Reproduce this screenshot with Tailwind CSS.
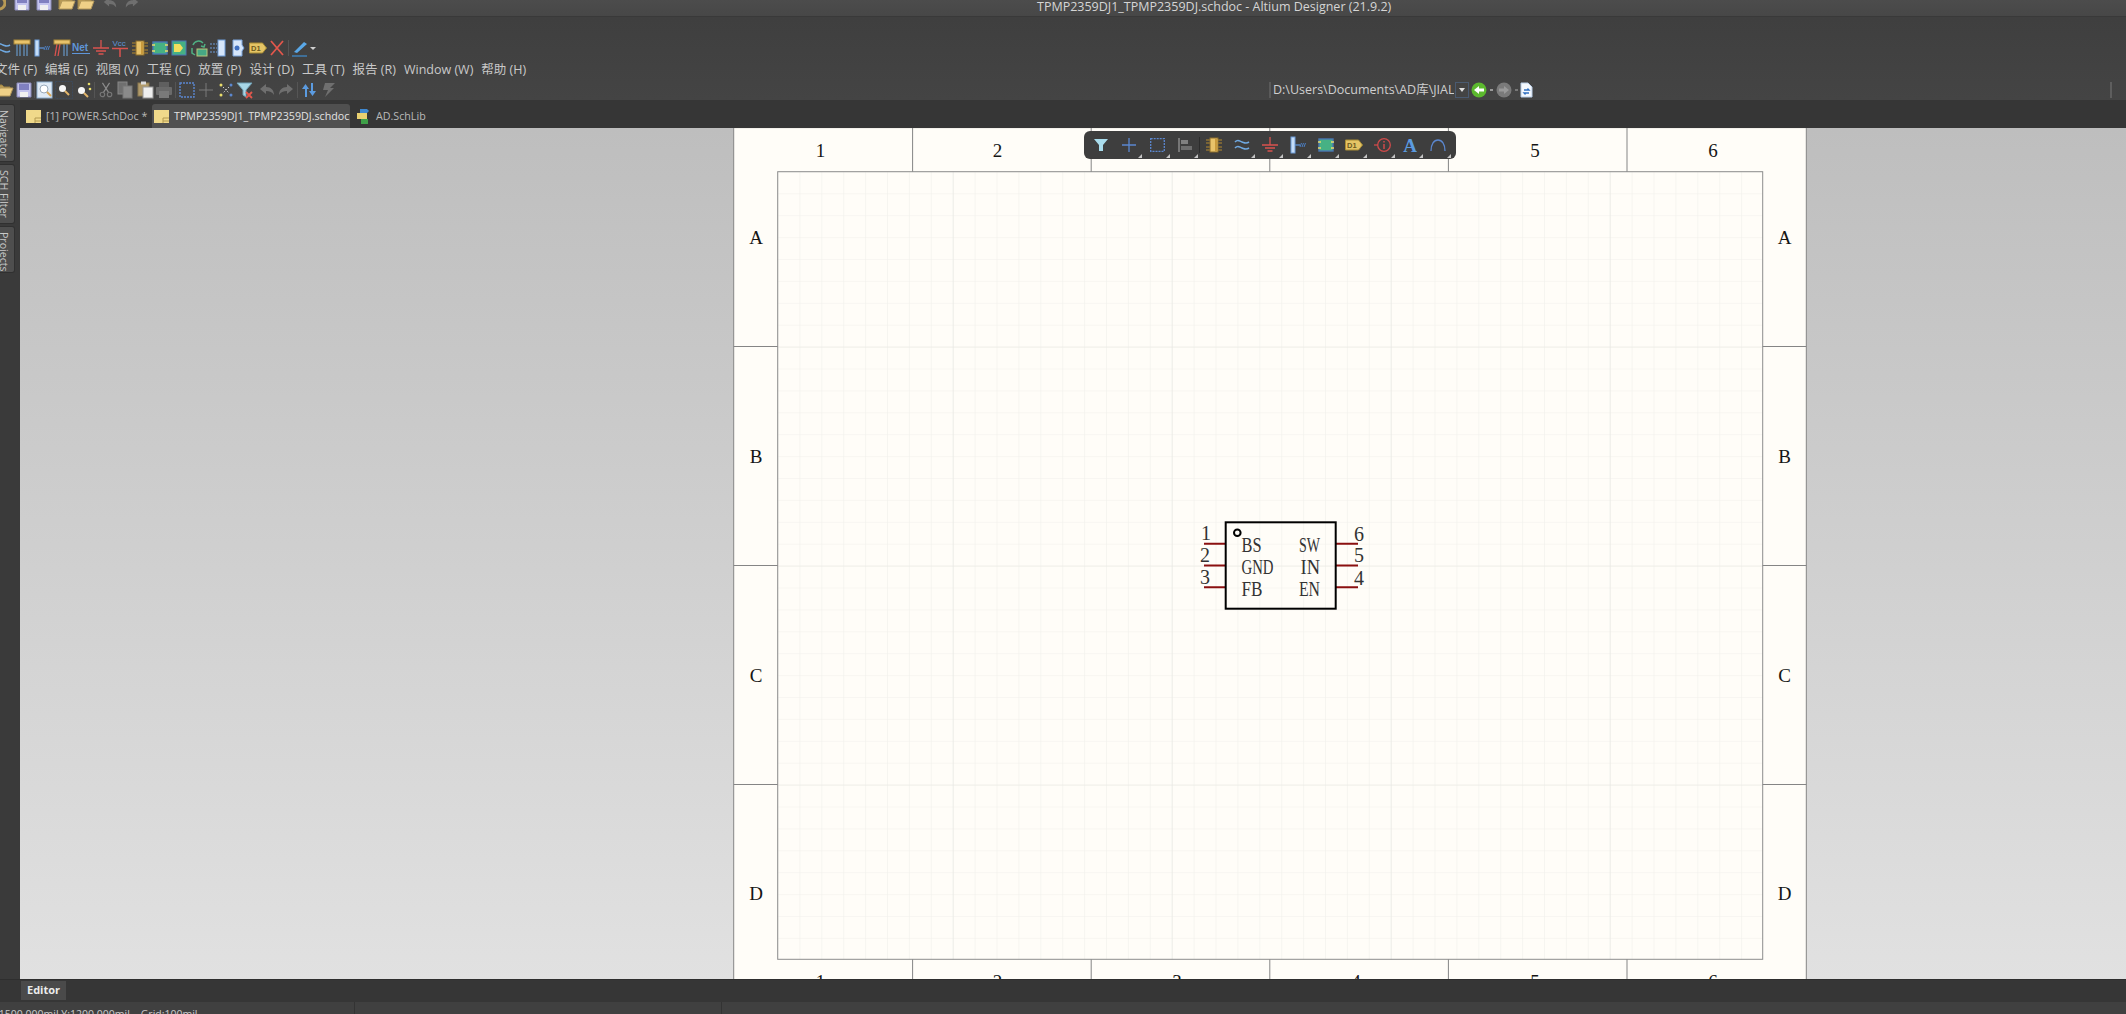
<!DOCTYPE html>
<html lang="zh">
<head>
    <meta charset="UTF-8">
    <title>TPMP2359DJ1_TPMP2359DJ.schdoc - Altium Designer (21.9.2)</title>
    <script src="https://cdn.jsdelivr.net/npm/@tailwindcss/browser@4"></script>
</head>
<body class="w-[2126px] h-[1014px] overflow-hidden flex flex-col bg-[#363636] text-[#c9c9c9] font-['Open_Sans','Noto_Sans_CJK_SC',sans-serif]">

    <!-- shared toolbar icons -->
    <svg class="hidden">
        <symbol id="wire" viewBox="0 0 18 18"><path d="M2 6c3-3 4-1 7 0s4 2 7 0M2 12c3-3 4-1 7 0s4 2 7 0" fill="none" stroke="#6fa8e0" stroke-width="1.6"/></symbol>
        <symbol id="comp" viewBox="0 0 18 18"><path d="M1 4h16M1 7h16M1 11h16M1 14h16" stroke="#b58a2e"/><rect x="5" y="2" width="8" height="14" fill="#e8c36a" stroke="#8c6d2a"/><rect x="10" y="3" width="2" height="12" fill="#c99a3c"/></symbol>
        <symbol id="ic" viewBox="0 0 18 18"><rect x="2" y="3" width="14" height="12" fill="#46b184" stroke="#4a78b5" stroke-width="1.4"/><path d="M1 6h3M1 12h3M14 6h3M14 12h3" stroke="#e8dc6a" stroke-width="1.6"/></symbol>
        <symbol id="gnd" viewBox="0 0 18 18"><path d="M9 1v8M1 9h16M4 12h10M6.5 15h5" fill="none" stroke="#d9534f" stroke-width="1.3"/></symbol>
        <symbol id="pin" viewBox="0 0 18 18"><rect x="2" y="1" width="4" height="16" fill="#c5ddf7" stroke="#6d9bd8"/><path d="M6 9h5" stroke="#5b8fd0" stroke-width="1.3"/><path d="M11 11l1.5-4M13 11l1.5-4M15 11l1.5-4" stroke="#4b7fc4"/></symbol>
        <symbol id="tag" viewBox="0 0 18 18"><path d="M.5 4h13l4 5-4 5H.5z" fill="#e4c465" stroke="#a88c35"/><text x="2" y="12" font-size="7.5" font-weight="700" font-family="Liberation Sans" fill="#6b5a20">D1</text></symbol>
        <symbol id="cut" viewBox="0 0 18 18"><path d="M5 1l7 11M13 1L6 12" stroke="#8b8b8b" stroke-width="1.3"/><circle cx="5" cy="14" r="2.5" fill="none" stroke="#777" stroke-width="1.3"/><circle cx="13" cy="14" r="2.5" fill="none" stroke="#777" stroke-width="1.3"/></symbol>
        <symbol id="disk" viewBox="0 0 18 18"><path d="M2 2h14v14H2z" fill="#c4c4ee" stroke="#8a8ab8"/><rect x="4" y="3" width="10" height="6" fill="#8080c0"/><rect x="5" y="11" width="8" height="5" fill="#f0f0f0"/></symbol>
        <symbol id="folder" viewBox="0 0 18 18"><path d="M1 15V4h5l2 2h6v2" fill="#b89a55" stroke="#9a8142"/><path d="M1 15l3-8h13l-3 8z" fill="#efd087" stroke="#b2975a"/></symbol>
        <symbol id="undo" viewBox="0 0 18 18"><path d="M2 8l6-5v3c5 0 8 3 8 8-2-3-4-4-8-4v3z" fill="#6f6f6f"/></symbol>
        <symbol id="redo" viewBox="0 0 18 18"><path d="M16 8l-6-5v3c-5 0-8 3-8 8 2-3 4-4 8-4v3z" fill="#6f6f6f"/></symbol>
        <symbol id="sheet" viewBox="0 0 15 13"><rect width="15" height="13" fill="#f0d98a"/><path d="M9 8h6M9 11h6M9 8v5" stroke="#b39a50"/></symbol>
    </svg>

    <!-- title bar -->
    <div class="h-[17px] shrink-0 flex items-start overflow-hidden bg-linear-to-b from-[#4c4c4c] to-[#474747] border-b border-[#393939]">
        <div class="w-[1037px] shrink-0 flex -mt-[6px]">
            <svg class="w-[12px] h-[18px] -ml-[6px]" viewBox="0 0 12 18"><circle cx="5" cy="9" r="6" fill="none" stroke="#b89a55" stroke-width="3"/></svg>
            <svg class="w-[18px] h-[18px] ml-[7px]"><use href="#disk"/></svg>
            <svg class="w-[18px] h-[18px] ml-[4px]"><use href="#disk"/></svg>
            <svg class="w-[18px] h-[18px] ml-[5px]"><use href="#folder"/></svg>
            <svg class="w-[18px] h-[18px] ml-[1px]"><use href="#folder"/></svg>
            <svg class="w-[16px] h-[18px] ml-[7px]"><use href="#undo"/></svg>
            <svg class="w-[16px] h-[18px] ml-[6px]"><use href="#redo"/></svg>
        </div>
        <span class="text-[12.5px] leading-[13px] whitespace-nowrap text-[#d5d5d5]">TPMP2359DJ1_TPMP2359DJ.schdoc - Altium Designer (21.9.2)</span>
    </div>

    <!-- ribbon -->
    <div class="h-[83px] shrink-0 flex flex-col bg-linear-to-b from-[#3f3f3f] to-[#444444]">
        <!-- wiring toolbar -->
        <div class="mt-[21px] h-[20px] flex items-center -ml-[7px]">
            <span class="w-[19.6px] flex justify-center"><svg class="w-[18px] h-[18px]"><use href="#wire"/></svg></span>
            <span class="w-[19.6px] flex justify-center"><svg class="w-[18px] h-[18px]" viewBox="0 0 18 18"><path d="M4 5v12M7 5v12M11 5v12M14 5v12" stroke="#6fa8e0"/><rect x="1" y="1" width="16" height="4" fill="#e8c36a" stroke="#a8873a"/></svg></span>
            <span class="w-[19.6px] flex justify-center"><svg class="w-[18px] h-[18px]"><use href="#pin"/></svg></span>
            <span class="w-[19.6px] flex justify-center"><svg class="w-[18px] h-[18px]" viewBox="0 0 18 18"><path d="M4 5L2 17M7 5L5 17" stroke="#d9534f" stroke-width="1.3"/><path d="M11 5v12M14 5v12" stroke="#6fa8e0"/><rect x="1" y="1" width="16" height="4" fill="#e8c36a" stroke="#a8873a"/></svg></span>
            <span class="w-[19.6px] flex justify-center"><svg class="w-[18px] h-[18px]" viewBox="0 0 18 18"><text x="0" y="12" font-size="10" font-weight="700" font-family="Liberation Sans" fill="#5f95d8">Net</text><path d="M0 14.5h18" stroke="#5f95d8"/></svg></span>
            <span class="w-[19.6px] flex justify-center"><svg class="w-[18px] h-[18px]"><use href="#gnd"/></svg></span>
            <span class="w-[19.6px] flex justify-center"><svg class="w-[18px] h-[18px]" viewBox="0 0 18 18"><text x="1.5" y="7" font-size="8" font-family="Liberation Sans" fill="#5f95d8">Vcc</text><path d="M1 9.5h16M9 9.5V18" stroke="#d9534f" stroke-width="1.5"/></svg></span>
            <span class="w-[19.6px] flex justify-center"><svg class="w-[18px] h-[18px]"><use href="#comp"/></svg></span>
            <span class="w-[19.6px] flex justify-center"><svg class="w-[18px] h-[18px]"><use href="#ic"/></svg></span>
            <span class="w-[19.6px] flex justify-center"><svg class="w-[18px] h-[18px]" viewBox="0 0 18 18"><rect x="2" y="2" width="14" height="14" fill="#46b184" stroke="#4a78b5"/><path d="M4 5h6l3 4-3 4H4z" fill="#f0df5e"/></svg></span>
            <span class="w-[19.6px] flex justify-center"><svg class="w-[18px] h-[18px]" viewBox="0 0 18 18"><path d="M3 6a6 6 0 0 1 10-2M15 5l-1 3-3-1" fill="none" stroke="#4fb083" stroke-width="1.5"/><rect x="7" y="10" width="10" height="7" fill="#46a884" stroke="#b8c87a"/><path d="M2 9v5l3 2" fill="none" stroke="#4fb083" stroke-width="1.5"/></svg></span>
            <span class="w-[19.6px] flex justify-center"><svg class="w-[18px] h-[18px]" viewBox="0 0 18 18"><path d="M1 5h7M1 9h7M1 13h7" stroke="#6d9bd8" stroke-dasharray="2 1"/><rect x="9" y="1" width="7" height="16" fill="#d6e6fa" stroke="#6d9bd8"/></svg></span>
            <span class="w-[19.6px] flex justify-center"><svg class="w-[18px] h-[18px]" viewBox="0 0 18 18"><path d="M4 1h9v5l2 3-2 3v5H4z" fill="#d6e6fa" stroke="#7ba4dc"/><circle cx="8" cy="9" r="2.5" fill="#3f6fc0"/></svg></span>
            <span class="w-[19.6px] flex justify-center"><svg class="w-[18px] h-[18px]"><use href="#tag"/></svg></span>
            <span class="w-[19.6px] flex justify-center"><svg class="w-[18px] h-[18px]" viewBox="0 0 18 18"><path d="M3 2l12 14M15 2L3 16" stroke="#e2574c" stroke-width="1.8"/></svg></span>
            <span class="w-[1px] h-[16px] bg-[#555555] ml-[1px]"></span>
            <span class="w-[19.6px] flex justify-center ml-[1px]"><svg class="w-[18px] h-[18px]" viewBox="0 0 18 18"><path d="M3 13L13 3l3 2L6 14z" fill="#5aa8e8"/><path d="M1 17h15" stroke="#3f88c8" stroke-width="1.3"/></svg></span>
            <span class="w-0 h-0 border-x-[3px] border-x-transparent border-t-[3px] border-t-[#d0d0d0]"></span>
        </div>

        <!-- menu -->
        <nav class="mt-[2px] h-[20px] flex items-center gap-[8px] -ml-[5px] text-[12.5px] whitespace-nowrap">
            <span>文件 (F)</span><span>编辑 (E)</span><span>视图 (V)</span><span>工程 (C)</span><span>放置 (P)</span><span>设计 (D)</span><span>工具 (T)</span><span>报告 (R)</span><span>Window (W)</span><span>帮助 (H)</span>
        </nav>

        <!-- standard toolbar -->
        <div class="h-[20px] flex items-center -ml-[5px]">
            <span class="w-[19.5px] flex justify-center"><svg class="w-[18px] h-[18px]"><use href="#folder"/></svg></span>
            <span class="w-[19.5px] flex justify-center"><svg class="w-[18px] h-[18px]"><use href="#disk"/></svg></span>
            <span class="w-[1px] h-[16px] bg-[#555555]"></span>
            <span class="w-[19.5px] flex justify-center"><svg class="w-[18px] h-[18px]" viewBox="0 0 18 18"><rect x="1" y="1" width="15" height="16" fill="#dfeaf5" stroke="#8fb0d0"/><circle cx="8" cy="8" r="4" fill="#fff" stroke="#9ab"/><path d="M11 11l4 4" stroke="#d9a85a" stroke-width="2"/></svg></span>
            <span class="w-[19.5px] flex justify-center"><svg class="w-[18px] h-[18px]" viewBox="0 0 18 18"><rect x=".5" y=".5" width="17" height="17" fill="none" stroke="#3d4a5c" stroke-dasharray="2 1"/><circle cx="7.5" cy="7.5" r="3.5" fill="#f7f7f7"/><path d="M10 10l4 4" stroke="#e2b56a" stroke-width="2"/></svg></span>
            <span class="w-[19.5px] flex justify-center"><svg class="w-[18px] h-[18px]" viewBox="0 0 18 18"><circle cx="6.5" cy="9.5" r="3.5" fill="#f7f7f7"/><path d="M9 12l4 4" stroke="#e2b56a" stroke-width="2"/><circle cx="14" cy="3" r="1.3" fill="#e8dc6a"/><circle cx="15" cy="8" r="1.3" fill="#e8dc6a"/></svg></span>
            <span class="w-[2.5px] flex justify-center"><span class="w-[1px] h-[16px] bg-[#555555]"></span></span>
            <span class="w-[19.5px] flex justify-center"><svg class="w-[16px] h-[16px]"><use href="#cut"/></svg></span>
            <span class="w-[19.5px] flex justify-center"><svg class="w-[18px] h-[18px]" viewBox="0 0 18 18"><rect x="2" y="1" width="9" height="12" fill="#6f6f6f" stroke="#888"/><rect x="7" y="5" width="9" height="12" fill="#8a8a8a" stroke="#777"/></svg></span>
            <span class="w-[19.5px] flex justify-center"><svg class="w-[18px] h-[18px]" viewBox="0 0 18 18"><rect x="2" y="2" width="11" height="13" fill="#b09a6a" stroke="#8a7850"/><rect x="5" y=".5" width="5" height="3" fill="#ddd"/><rect x="7" y="6" width="10" height="11" fill="#efefef" stroke="#999"/></svg></span>
            <span class="w-[19.5px] flex justify-center"><svg class="w-[18px] h-[18px]" viewBox="0 0 18 18"><rect x="4" y="1" width="10" height="5" fill="#5f5f5f"/><rect x="1" y="6" width="16" height="8" rx="1" fill="#6a6a6a"/><rect x="4" y="10" width="10" height="7" fill="#7a7a7a"/></svg></span>
            <span class="w-[3px] flex justify-center"><span class="w-[1px] h-[16px] bg-[#555555]"></span></span>
            <span class="w-[19.5px] flex justify-center"><svg class="w-[16px] h-[16px]" viewBox="0 0 16 16"><rect x="1" y="1" width="14" height="14" fill="none" stroke="#5b87cf" stroke-width="1.4" stroke-dasharray="2 1"/></svg></span>
            <span class="w-[19.5px] flex justify-center"><svg class="w-[16px] h-[16px]" viewBox="0 0 16 16"><path d="M8 1v14M1 8h14" stroke="#7a7a7a"/></svg></span>
            <span class="w-[19.5px] flex justify-center"><svg class="w-[16px] h-[16px]" viewBox="0 0 16 16"><circle cx="3" cy="3" r="1.5" fill="#e8dc6a"/><circle cx="3" cy="13" r="1.5" fill="#e8dc6a"/><circle cx="13" cy="3" r="1.5" fill="#5b87cf"/><circle cx="13" cy="13" r="1.5" fill="#5b87cf"/><path d="M5 5l6 6M11 5l-6 6" stroke="#c9c9c9" stroke-dasharray="1.5 1.5"/></svg></span>
            <span class="w-[19.5px] flex justify-center"><svg class="w-[18px] h-[18px]" viewBox="0 0 18 18"><path d="M1 2h15l-6 7v7l-3-2V9z" fill="#a8d6e6" stroke="#6fa0b5"/><path d="M10 11l6 6M16 11l-6 6" stroke="#e2574c" stroke-width="1.8"/></svg></span>
            <span class="w-[19.5px] ml-[2px] flex justify-center"><svg class="w-[18px] h-[18px]"><use href="#undo"/></svg></span>
            <span class="w-[19.5px] flex justify-center"><svg class="w-[18px] h-[18px]"><use href="#redo"/></svg></span>
            <span class="w-[3px] flex justify-center"><span class="w-[1px] h-[16px] bg-[#555555]"></span></span>
            <span class="w-[19.5px] flex justify-center"><svg class="w-[16px] h-[16px]" viewBox="0 0 16 16"><path d="M4 15V7H1l3.500-5L8 7H6v8zM12 1v8h3l-3.500 5L8 9h2V1z" fill="#5b9be0"/></svg></span>
            <span class="w-[19.5px] flex justify-center"><svg class="w-[16px] h-[16px]" viewBox="0 0 16 16"><path d="M5 1h10l-5 5h4L5 15l3-7H3z" fill="#6f6f6f"/></svg></span>

            <!-- address box -->
            <span class="ml-[931px] w-[2px] h-[16px] bg-[#5a5a5a]"></span>
            <span class="ml-[2px] w-[181px] overflow-hidden whitespace-nowrap text-[12.5px] text-[#cfcfcf]">D:\Users\Documents\AD库\JIAL</span>
            <span class="ml-[1px] w-[14px] h-[16px] flex items-center justify-center border border-[#4a5a70]"><span class="w-0 h-0 border-x-[3px] border-x-transparent border-t-[4px] border-t-[#e0e0e0]"></span></span>
            <svg class="ml-[2px] w-[16px] h-[16px]" viewBox="0 0 16 16"><circle cx="8" cy="8" r="7.5" fill="#5cb82e"/><path d="M3 8l5-4v2.500h5v3H8V12z" fill="#fff"/></svg>
            <span class="ml-[3px] w-[3px] h-[2px] bg-[#999999]"></span>
            <svg class="ml-[3px] w-[16px] h-[16px]" viewBox="0 0 16 16"><circle cx="8" cy="8" r="7.5" fill="#7a7a7a"/><path d="M13 8L8 4v2.500H3v3h5V12z" fill="#9a9a9a"/></svg>
            <span class="ml-[3px] w-[3px] h-[2px] bg-[#777777]"></span>
            <svg class="ml-[2px] w-[13px] h-[16px]" viewBox="0 0 13 16"><path d="M1 1h7l4 4v10H1z" fill="#f4f8fd" stroke="#b8cde6"/><path d="M4 8h5l-1.500-1.500M9 11H4l1.500 1.500" fill="none" stroke="#2f6fc0" stroke-width="1.3"/></svg>
            <span class="ml-auto mr-[14px] w-[2px] h-[16px] bg-[#5e5e5e]"></span>
        </div>
    </div>

    <!-- workspace -->
    <div class="flex-1 min-h-0 flex">
        <!-- side panels -->
        <aside class="w-[20px] shrink-0 pt-[4px] flex flex-col gap-[2px] bg-[#3a3a3a] text-[10.6px] overflow-hidden">
            <div class="w-[15px] h-[58px] pt-[5px] rounded-r-[3px] bg-[#4e4e4e] border border-l-0 border-[#303030] overflow-hidden"><span class="block -ml-[4px] leading-[16px] whitespace-nowrap [writing-mode:vertical-rl]">Navigator</span></div>
            <div class="w-[15px] h-[60px] pt-[5px] rounded-r-[3px] bg-[#4e4e4e] border border-l-0 border-[#303030] overflow-hidden"><span class="block -ml-[4px] leading-[16px] whitespace-nowrap [writing-mode:vertical-rl]">SCH Filter</span></div>
            <div class="w-[15px] h-[47px] pt-[5px] rounded-r-[3px] bg-[#4e4e4e] border border-l-0 border-[#303030] overflow-hidden"><span class="block -ml-[4px] leading-[16px] whitespace-nowrap [writing-mode:vertical-rl]">Projects</span></div>
        </aside>

        <div class="flex-1 min-w-0 flex flex-col">
            <!-- document tabs -->
            <div class="h-[28px] shrink-0 pt-[4px] flex text-[10.7px] whitespace-nowrap">
                <div class="w-[132px] shrink-0 flex items-center pl-[6px] gap-[5px] text-[#b9b9b9]">
                    <svg class="w-[15px] h-[13px] shrink-0"><use href="#sheet"/></svg>
                    <span>[1] POWER.SchDoc *</span>
                </div>
                <div class="w-[198px] shrink-0 flex items-center pl-[2px] gap-[5px] rounded-t-[3px] bg-[#505050] text-[#e2e2e2]">
                    <svg class="w-[15px] h-[13px] shrink-0"><use href="#sheet"/></svg>
                    <span>TPMP2359DJ1_TPMP2359DJ.schdoc</span>
                </div>
                <div class="flex items-center pl-[5px] gap-[5px] text-[#b9b9b9]">
                    <svg class="w-[16px] h-[16px] shrink-0" viewBox="0 0 16 16"><path d="M5 1h7l2 2-2 2H5z" fill="#3f88d0"/><rect x="2" y="5" width="10" height="6" fill="#e8d070"/><rect x="6" y="11" width="7" height="5" fill="#3fa048"/></svg>
                    <span>AD.SchLib</span>
                </div>
            </div>

            <!-- schematic canvas -->
            <main class="flex-1 min-h-0 relative overflow-hidden bg-linear-to-b from-[#bebebe] to-[#e1e1e1]">
                <svg class="absolute left-[713px] top-[-1px] w-[1074px] h-[876px]" viewBox="733 127 1074 876">
                    <defs>
                        <pattern id="minor" x="733.7" y="127.6" width="21.9" height="21.9" patternUnits="userSpaceOnUse"><path d="M0 0h21.9M0 0v21.9" fill="none" stroke="#f1f0eb" stroke-width="1.2"/></pattern>
                        <pattern id="major" x="733.7" y="127.6" width="219" height="219" patternUnits="userSpaceOnUse"><path d="M0 0h219M0 0v219" fill="none" stroke="#e7e7e2" stroke-width="1.2"/></pattern>
                    </defs>
                    <rect x="733.7" y="127.6" width="1072.6" height="875" fill="#fffdf8" stroke="#858585"/>
                    <rect x="777.7" y="171.7" width="985" height="787.6" fill="url(#minor)"/>
                    <rect x="777.7" y="171.7" width="985" height="787.6" fill="url(#major)"/>
                    <rect x="777.7" y="171.7" width="985" height="787.6" fill="none" stroke="#8c8c8c"/>
                    <path d="M912.6 127.6V171.7M1091.2 127.6V171.7M1269.8 127.6V171.7M1448.4 127.6V171.7M1627 127.6V171.7M912.6 959.3V1003M1091.2 959.3V1003M1269.8 959.3V1003M1448.4 959.3V1003M1627 959.3V1003M733.7 346.5H777.7M733.7 565.5H777.7M733.7 784.5H777.7M1762.7 346.5H1806.3M1762.7 565.5H1806.3M1762.7 784.5H1806.3" stroke="#858585" fill="none"/>

                    <g class="font-['Liberation_Serif',serif]" font-size="19" fill="#151515" text-anchor="middle">
                        <text x="820.5" y="156.5">1</text><text x="997.5" y="156.5">2</text><text x="1177" y="156.5">3</text><text x="1356" y="156.5">4</text><text x="1535" y="156.5">5</text><text x="1713" y="156.5">6</text>
                        <text x="820.5" y="988">1</text><text x="997.5" y="988">2</text><text x="1177" y="988">3</text><text x="1356" y="988">4</text><text x="1535" y="988">5</text><text x="1713" y="988">6</text>
                        <text x="756" y="244">A</text><text x="756" y="463">B</text><text x="756" y="682">C</text><text x="756" y="900">D</text>
                        <text x="1784.5" y="244">A</text><text x="1784.5" y="463">B</text><text x="1784.5" y="682">C</text><text x="1784.5" y="900">D</text>
                    </g>

                    <!-- TPMP2359 symbol -->
                    <path d="M1204 543.7h22M1204 565.4h22M1204 587.2h22M1336 543.7h22M1336 565.4h22M1336 587.2h22" stroke="#8b1010" stroke-width="2"/>
                    <rect x="1225.7" y="522.3" width="110" height="86.4" fill="none" stroke="#000" stroke-width="2"/>
                    <circle cx="1237.3" cy="532.7" r="3.3" fill="none" stroke="#000" stroke-width="2"/>
                    <g class="font-['Liberation_Serif',serif]" font-size="21" fill="#333333">
                        <text x="1241.5" y="551.7" textLength="20" lengthAdjust="spacingAndGlyphs">BS</text>
                        <text x="1241.5" y="574" textLength="32" lengthAdjust="spacingAndGlyphs">GND</text>
                        <text x="1241.5" y="595.7" textLength="21" lengthAdjust="spacingAndGlyphs">FB</text>
                        <text x="1299" y="551.7" textLength="21" lengthAdjust="spacingAndGlyphs">SW</text>
                        <text x="1300.5" y="574" textLength="19.5" lengthAdjust="spacingAndGlyphs">IN</text>
                        <text x="1299" y="595.7" textLength="21" lengthAdjust="spacingAndGlyphs">EN</text>
                        <text x="1201" y="540" font-size="20">1</text>
                        <text x="1200" y="562" font-size="20">2</text>
                        <text x="1200" y="584" font-size="20">3</text>
                        <text x="1354" y="540.5" font-size="20">6</text>
                        <text x="1354" y="562" font-size="20">5</text>
                        <text x="1354" y="585" font-size="20">4</text>
                    </g>
                </svg>

                <!-- active bar -->
                <div class="absolute left-[1064px] top-[3px] h-[28px] pl-[3px] pr-[4px] flex items-center rounded-[6px] bg-[#3e3e3e]">
                    <span class="relative w-[28px] h-[28px] flex items-center justify-center"><svg class="w-[14px] h-[12px]" viewBox="0 0 14 12"><path d="M0 0h14L9 6v6H5V6z" fill="#a9dcec"/></svg></span>
                    <span class="relative w-[28px] h-[28px] flex items-center justify-center"><svg class="w-[14px] h-[14px]" viewBox="0 0 14 14"><path d="M7 0v14M0 7h14" stroke="#5b87cf" stroke-width="1.3"/></svg><i class="absolute right-[1px] bottom-[1px] border-b-[4px] border-l-[4px] border-l-transparent border-b-[#c4c4c4]"></i></span>
                    <span class="relative w-[28px] h-[28px] flex items-center justify-center"><svg class="w-[15px] h-[14px]" viewBox="0 0 15 14"><rect x=".7" y=".7" width="13.6" height="12.6" fill="none" stroke="#5b87cf" stroke-width="1.3" stroke-dasharray="2 1"/></svg><i class="absolute right-[1px] bottom-[1px] border-b-[4px] border-l-[4px] border-l-transparent border-b-[#c4c4c4]"></i></span>
                    <span class="relative w-[28px] h-[28px] flex items-center justify-center"><svg class="w-[14px] h-[14px]" viewBox="0 0 14 14"><path d="M1 0v14" stroke="#8a8a8a" stroke-width="1.5"/><rect x="3" y="2" width="7" height="4" fill="#808080"/><rect x="3" y="8" width="11" height="4" fill="#6e6e6e"/></svg><i class="absolute right-[1px] bottom-[1px] border-b-[4px] border-l-[4px] border-l-transparent border-b-[#c4c4c4]"></i></span>
                    <span class="w-[1px] h-[16px] bg-[#2c2c2c]"></span>
                    <span class="relative w-[28px] h-[28px] flex items-center justify-center"><svg class="w-[18px] h-[18px]"><use href="#comp"/></svg></span>
                    <span class="relative w-[28px] h-[28px] flex items-center justify-center"><svg class="w-[18px] h-[18px]"><use href="#wire"/></svg><i class="absolute right-[1px] bottom-[1px] border-b-[4px] border-l-[4px] border-l-transparent border-b-[#c4c4c4]"></i></span>
                    <span class="relative w-[28px] h-[28px] flex items-center justify-center"><svg class="w-[18px] h-[18px]"><use href="#gnd"/></svg><i class="absolute right-[1px] bottom-[1px] border-b-[4px] border-l-[4px] border-l-transparent border-b-[#c4c4c4]"></i></span>
                    <span class="relative w-[28px] h-[28px] flex items-center justify-center"><svg class="w-[18px] h-[18px]"><use href="#pin"/></svg><i class="absolute right-[1px] bottom-[1px] border-b-[4px] border-l-[4px] border-l-transparent border-b-[#c4c4c4]"></i></span>
                    <span class="relative w-[28px] h-[28px] flex items-center justify-center"><svg class="w-[18px] h-[18px]"><use href="#ic"/></svg><i class="absolute right-[1px] bottom-[1px] border-b-[4px] border-l-[4px] border-l-transparent border-b-[#c4c4c4]"></i></span>
                    <span class="relative w-[28px] h-[28px] flex items-center justify-center"><svg class="w-[18px] h-[18px]"><use href="#tag"/></svg><i class="absolute right-[1px] bottom-[1px] border-b-[4px] border-l-[4px] border-l-transparent border-b-[#c4c4c4]"></i></span>
                    <span class="relative w-[28px] h-[28px] flex items-center justify-center"><svg class="w-[17px] h-[16px]" viewBox="0 0 17 16"><path d="M0 8h4" stroke="#cf4a4a" stroke-width="1.3"/><circle cx="10" cy="8" r="6.3" fill="none" stroke="#cf4a4a" stroke-width="1.3"/><path d="M10 7v5M10 4v1.500" stroke="#cf4a4a" stroke-width="1.5"/></svg><i class="absolute right-[1px] bottom-[1px] border-b-[4px] border-l-[4px] border-l-transparent border-b-[#c4c4c4]"></i></span>
                    <span class="relative w-[28px] h-[28px] flex items-center justify-center font-['Liberation_Serif',serif] font-bold text-[19px] leading-none text-[#5b9be0]">A<i class="absolute right-[1px] bottom-[1px] border-b-[4px] border-l-[4px] border-l-transparent border-b-[#c4c4c4]"></i></span>
                    <span class="relative w-[28px] h-[28px] flex items-center justify-center"><svg class="w-[16px] h-[14px]" viewBox="0 0 16 14"><path d="M1 13C1 6 4 2 8 2s7 4 7 11" fill="none" stroke="#5b87cf" stroke-width="1.3"/></svg><i class="absolute right-[1px] bottom-[1px] border-b-[4px] border-l-[4px] border-l-transparent border-b-[#c4c4c4]"></i></span>
                </div>
            </main>
        </div>
    </div>

    <!-- panel strip -->
    <div class="h-[23px] shrink-0 flex items-start pl-[21px] pt-[1px] bg-[#363636] border-t border-[#2e2e2e]">
        <span class="w-[45px] h-[19px] flex items-center justify-center bg-[#4a4a4a] text-[11px] font-bold text-[#ececec]">Editor</span>
    </div>

    <!-- status bar -->
    <div class="h-[12px] shrink-0 flex overflow-hidden bg-[#404040] text-[10.5px] leading-none text-[#c9c9c9] whitespace-nowrap">
        <span class="w-[365px] shrink-0 pt-[7px] -ml-[10px] border-r border-[#333333]">X:1500.000mil Y:1200.000mil &nbsp; &nbsp;Grid:100mil</span>
        <span class="w-[367px] shrink-0 border-r border-[#333333]"></span>
    </div>
</body>
</html>
